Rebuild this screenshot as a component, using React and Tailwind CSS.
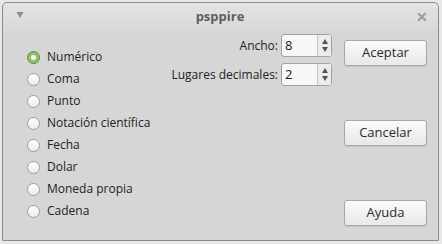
import React from "react";

const options = [
  "Numérico",
  "Coma",
  "Punto",
  "Notación científica",
  "Fecha",
  "Dolar",
  "Moneda propia",
  "Cadena",
];

function Radio({ checked }) {
  if (checked) {
    return (
      <span className="flex h-[13px] w-[13px] items-center justify-center rounded-full border border-[#5f8a3e] bg-[#93c06a]">
        <span className="h-[5px] w-[5px] rounded-full bg-[#f4f8ee]" />
      </span>
    );
  }
  return (
    <span className="h-[13px] w-[13px] rounded-full border border-[#9d9d9d] bg-gradient-to-b from-[#ffffff] to-[#ececec]" />
  );
}

function Tri({ up, w = 6, h = 5, color = "#555" }) {
  return (
    <svg width={w} height={h} viewBox="0 0 6 5">
      <path d={up ? "M3 0 L6 5 L0 5 Z" : "M0 0 L6 0 L3 5 Z"} fill={color} />
    </svg>
  );
}

function Spin({ value }) {
  return (
    <div className="flex h-[23px] w-[51px] rounded-[3px] border border-[#a2a2a2] bg-[#f7f7f7]">
      <div className="flex flex-1 items-center pl-[3px] text-[13px] text-[#1a1a1a]">{value}</div>
      <div className="flex w-[14px] flex-col items-center justify-center gap-[3px] border-l border-[#c4c4c4] bg-[#ececec]">
        <Tri up />
        <Tri />
      </div>
    </div>
  );
}

function Button({ children }) {
  return (
    <button className="h-[26px] w-[83px] rounded-[3px] border border-[#a7a7a7] bg-gradient-to-b from-[#fafafa] to-[#e8e8e8] text-[13px] text-[#2b2b2b] shadow-[0_1px_0_#c2c2c2]">
      {children}
    </button>
  );
}

export default function App() {
  return (
    <div
      className="h-[244px] w-[442px] bg-[#e8e8e8] pl-[2px] pt-[2px] text-[12px]"
      style={{ fontFamily: '"Open Sans", "Noto Sans", sans-serif' }}
    >
      <div className="flex h-[239px] w-[437px] flex-col rounded-t-[5px] border border-[#8c8c8c] bg-[#d6d6d6]">
        {/* title bar */}
        <div className="flex h-[28px] items-center rounded-t-[5px] bg-gradient-to-b from-[#e4e4e4] to-[#d8d8d8] pl-[13px] pr-[10px]">
          <span className="mt-[-4px]">
            <Tri w={8} h={6} color="#8e8e8e" />
          </span>
          <span className="flex-1 text-center text-[13px] font-bold text-[#5e5e5e]">psppire</span>
          <span className="text-[14px] font-bold leading-none text-[#9a9a9a]">✕</span>
        </div>

        <div className="flex flex-1">
          {/* radio list */}
          <div className="flex flex-col pl-[24px] pt-[15px]">
            {options.map((o, i) => (
              <div key={o} className="flex h-[22px] items-center gap-[7px] text-[#222]">
                <Radio checked={i === 0} />
                <span>{o}</span>
              </div>
            ))}
          </div>

          {/* width / decimals */}
          <div className="ml-auto grid grid-cols-[auto_auto] content-start items-center gap-x-[3px] gap-y-[6px] pt-[3px] text-[#222]">
            <span className="text-right">Ancho:</span>
            <Spin value="8" />
            <span className="text-right">Lugares decimales:</span>
            <Spin value="2" />
          </div>

          {/* buttons */}
          <div className="ml-[12px] mr-[11px] flex flex-col gap-[54px] pt-[9px]">
            <Button>Aceptar</Button>
            <Button>Cancelar</Button>
            <Button>Ayuda</Button>
          </div>
        </div>
      </div>
    </div>
  );
}
